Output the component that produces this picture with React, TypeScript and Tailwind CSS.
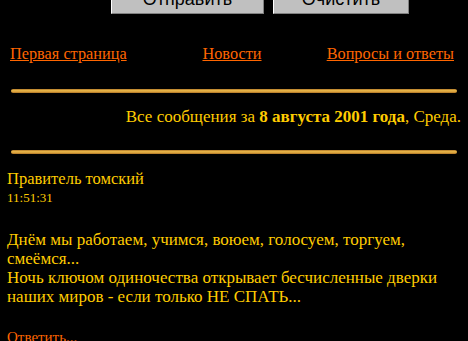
import React from "react";

const serif = { fontFamily: '"Liberation Serif", "Times New Roman", serif' };

function GoldLine() {
  return (
    <div className="mx-[11px] h-[4px] rounded-full bg-[linear-gradient(to_bottom,#b07828,#e8b548_40%,#d9a03c_70%,#a86e22)]" />
  );
}

function WinButton({ label, w }: { label: string; w: string }) {
  return (
    <button
      className={`${w} h-[30px] bg-[#c0c0c0] text-black text-[18px] leading-[20.7px] border-t border-l border-t-white border-l-white border-b border-r border-b-[#808080] border-r-[#808080] flex items-center justify-center`}
      style={{ fontFamily: '"Liberation Sans", Arial, sans-serif' }}
    >
      {label}
    </button>
  );
}

export default function App() {
  return (
    <div className="w-[468px] h-[341px] overflow-hidden bg-black" style={serif}>
      <div className="-mt-[16px] flex gap-[9px] pl-[111px]">
        <WinButton label="Отправить" w="w-[153px]" />
        <WinButton label="Очистить" w="w-[136px]" />
      </div>

      <div className="mt-[31px] grid grid-cols-3 pl-[10px] pr-[14px] text-[16.3px] leading-[18px] text-[#ff6600]">
        <a href="#" className="justify-self-start underline whitespace-nowrap">Первая страница</a>
        <a href="#" className="justify-self-center underline whitespace-nowrap">Новости</a>
        <a href="#" className="justify-self-end underline whitespace-nowrap">Вопросы и ответы</a>
      </div>

      <div className="mt-[26px]">
        <GoldLine />
      </div>

      <div className="mt-[15px] pr-[7px] text-right text-[17px] leading-[18px] text-[#ffcc00]">
        Все сообщения за <b>8 августа 2001 года</b>, Среда.
      </div>

      <div className="mt-[24px]">
        <GoldLine />
      </div>

      <div className="mt-[15px] px-[7px] text-[#ffcc00]">
        <div className="text-[16.5px] leading-[19px]">Правитель томский</div>
        <div className="text-[13px] leading-[19px]">11:51:31</div>
        <div className="mt-[23px] text-[17px] leading-[19px]">
          Днём мы работаем, учимся, воюем, голосуем, торгуем, смеёмся...
          <br />
          Ночь ключом одиночества открывает бесчисленные дверки наших миров - если только НЕ СПАТЬ...
        </div>
        <div className="mt-[22px] text-[15px] leading-[19px]">
          <a href="#" className="text-[#ff6600] underline">Ответить...</a>
        </div>
      </div>
    </div>
  );
}
